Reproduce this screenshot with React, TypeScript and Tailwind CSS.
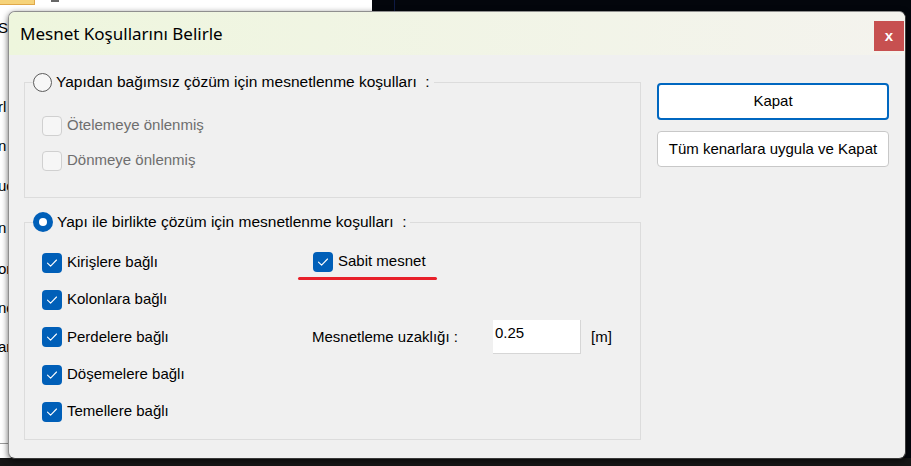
import React from 'react'

const body = { fontFamily: '"Liberation Sans", Arial, sans-serif' }

function Check({ on = true, disabled = false }: { on?: boolean; disabled?: boolean }) {
  if (disabled || !on) {
    return <span className="block w-[20px] h-[20px] shrink-0 rounded-[4px] border border-[#d0d0d0] bg-[#f6f6f6]" />
  }
  return (
    <span className="flex items-center justify-center w-[20px] h-[20px] shrink-0 rounded-[4px] bg-[#005fb8]">
      <svg width="20" height="20" viewBox="0 0 20 20" fill="none">
        <path d="M5.5 10.2 L8.6 13.2 L14.5 7" stroke="white" strokeWidth="1.1" strokeLinecap="round" strokeLinejoin="round" />
      </svg>
    </span>
  )
}

function Radio({ on }: { on: boolean }) {
  if (on) {
    return (
      <span className="flex items-center justify-center w-[20px] h-[20px] rounded-full bg-[#005fb8]">
        <span className="block w-[8px] h-[8px] rounded-full bg-white" />
      </span>
    )
  }
  return <span className="block w-[19px] h-[19px] rounded-full border border-[#5c5c5c] bg-[#f7f7f7]" />
}

function Row({ label, disabled = false, h }: { label: string; disabled?: boolean; h: string }) {
  return (
    <div className={`flex items-center gap-[5px] ${h}`}>
      <Check disabled={disabled} />
      <span className={`text-[15px] ${disabled ? 'text-[#6e6e6e]' : 'text-black'}`}>{label}</span>
    </div>
  )
}

function Legend({ on, text }: { on: boolean; text: string }) {
  return (
    <legend className="ml-[8px] h-[20px] flex items-center gap-[4px] pr-[4px]">
      <Radio on={on} />
      <span className="text-[15.5px] text-black whitespace-pre">{text}</span>
    </legend>
  )
}

export default function App() {
  // bits of the window lying behind the dialog
  const fragments = [
    { t: 'Sy', y: 'mt-[14px]' },
    { t: 'rl', y: 'mt-[61px]' },
    { t: 'n', y: 'mt-[21px]' },
    { t: 'uç', y: 'mt-[22px]' },
    { t: 'n', y: 'mt-[24px]' },
    { t: 'on', y: 'mt-[23px]' },
    { t: 'ne', y: 'mt-[21px]' },
    { t: 'ar', y: 'mt-[21px]' },
  ]

  return (
    <div className="relative w-[911px] h-[466px] overflow-hidden bg-[#121212]" style={body}>
      <div className="flex flex-col h-full">
        <div className="flex h-[458px]">
          <div className="relative w-[372px] bg-white flex flex-col">
            <div className="flex h-[5px]">
              <div className="w-[35px] h-[5px] bg-[#f6d37a] border-b border-r border-[#e0a84a]" />
              <div className="ml-[16px] w-[8px] h-[2px] bg-[#666]" />
            </div>
            <div className="flex flex-col text-[15px] text-black leading-[18px]">
              {fragments.map((f, i) => (
                <span key={i} className={`${f.y} -ml-[2px]`}>{f.t}</span>
              ))}
            </div>
            <div className="mt-auto mb-[14px] h-px bg-[#9a9a9a]" />
          </div>
          <div className="flex-1 bg-[#03060c] flex">
            <div className="ml-[22px] w-px bg-[#0e1a44]" />
          </div>
        </div>
        <div className="flex-1 bg-[#161616]" />
      </div>

      <div className="absolute left-[8px] top-[11px] w-[898px] h-[448px] rounded-[7px] border border-[#8f8f8f] border-r-[#3a3a3a] border-b-[#3a3a3a] bg-[#f0f0f0] overflow-hidden shadow-[0_2px_6px_rgba(0,0,0,0.6)] flex flex-col">
        <div className="h-[43px] shrink-0 flex items-center justify-between bg-gradient-to-r from-[#eef6dd] to-[#f4f3ee] pl-[11px] pr-[1px]">
          <span className="text-[17px] text-black" style={{ fontFamily: '"Noto Sans", "Open Sans", sans-serif' }}>
            Mesnet Koşullarını Belirle
          </span>
          <div className="w-[30px] h-[30px] mt-[5px] bg-[#c75050] flex items-center justify-center text-white font-bold text-[15px] leading-none pb-[2px]">
            x
          </div>
        </div>

        <div className="flex flex-1 pl-[15px] pr-[16px] pt-[17px] gap-[16px]">
          <div className="w-[617px] flex flex-col gap-[14px]">
            <fieldset className="border border-[#dcdcdc] h-[126px] px-0">
              <Legend on={false} text="Yapıdan bağımsız çözüm için mesnetlenme koşulları  :" />
              <div className="pl-[17px] pt-[16px] flex flex-col">
                <Row label="Ötelemeye önlenmiş" disabled h="h-[35px]" />
                <Row label="Dönmeye önlenmiş" disabled h="h-[35px]" />
              </div>
            </fieldset>

            <fieldset className="border border-[#dcdcdc] h-[228px] px-0">
              <Legend on text="Yapı ile birlikte çözüm için mesnetlenme koşulları  :" />
              <div className="pl-[17px] pt-[12px] flex">
                <div className="w-[271px] flex flex-col">
                  <Row label="Kirişlere bağlı" h="h-[37px]" />
                  <Row label="Kolonlara bağlı" h="h-[37px]" />
                  <Row label="Perdelere bağlı" h="h-[38px]" />
                  <Row label="Döşemelere bağlı" h="h-[37px]" />
                  <Row label="Temellere bağlı" h="h-[37px]" />
                </div>
                <div className="flex flex-col">
                  <div className="relative h-[37px] flex items-center gap-[5px] -mt-[1px]">
                    <Check />
                    <span className="text-[15px] text-black">Sabit mesnet</span>
                    <span className="absolute left-[-15px] top-[34px] w-[139px] h-[3px] rounded-full bg-[#e8202a]" />
                  </div>
                  <div className="h-[74px] flex items-end">
                    <div className="flex items-center h-[34px] -ml-[1px]">
                      <span className="w-[181px] text-[15px] text-black">Mesnetleme uzaklığı :</span>
                      <div className="w-[88px] h-[34px] bg-white border-b border-r border-[#d6d6d6] pl-[2px] pt-[3px] text-[15px] text-black leading-[20px]">
                        0.25
                      </div>
                      <span className="ml-[10px] text-[15px] text-black">[m]</span>
                    </div>
                  </div>
                </div>
              </div>
            </fieldset>
          </div>

          <div className="w-[232px] flex flex-col gap-[11px] pt-[11px]">
            <button className="h-[37px] rounded-[4px] border-2 border-[#0067c0] bg-white text-[15px] text-black">
              Kapat
            </button>
            <button className="h-[36px] rounded-[4px] border border-[#c8c8c8] bg-white text-[15px] text-black">
              Tüm kenarlara uygula ve Kapat
            </button>
          </div>
        </div>
      </div>
    </div>
  )
}
